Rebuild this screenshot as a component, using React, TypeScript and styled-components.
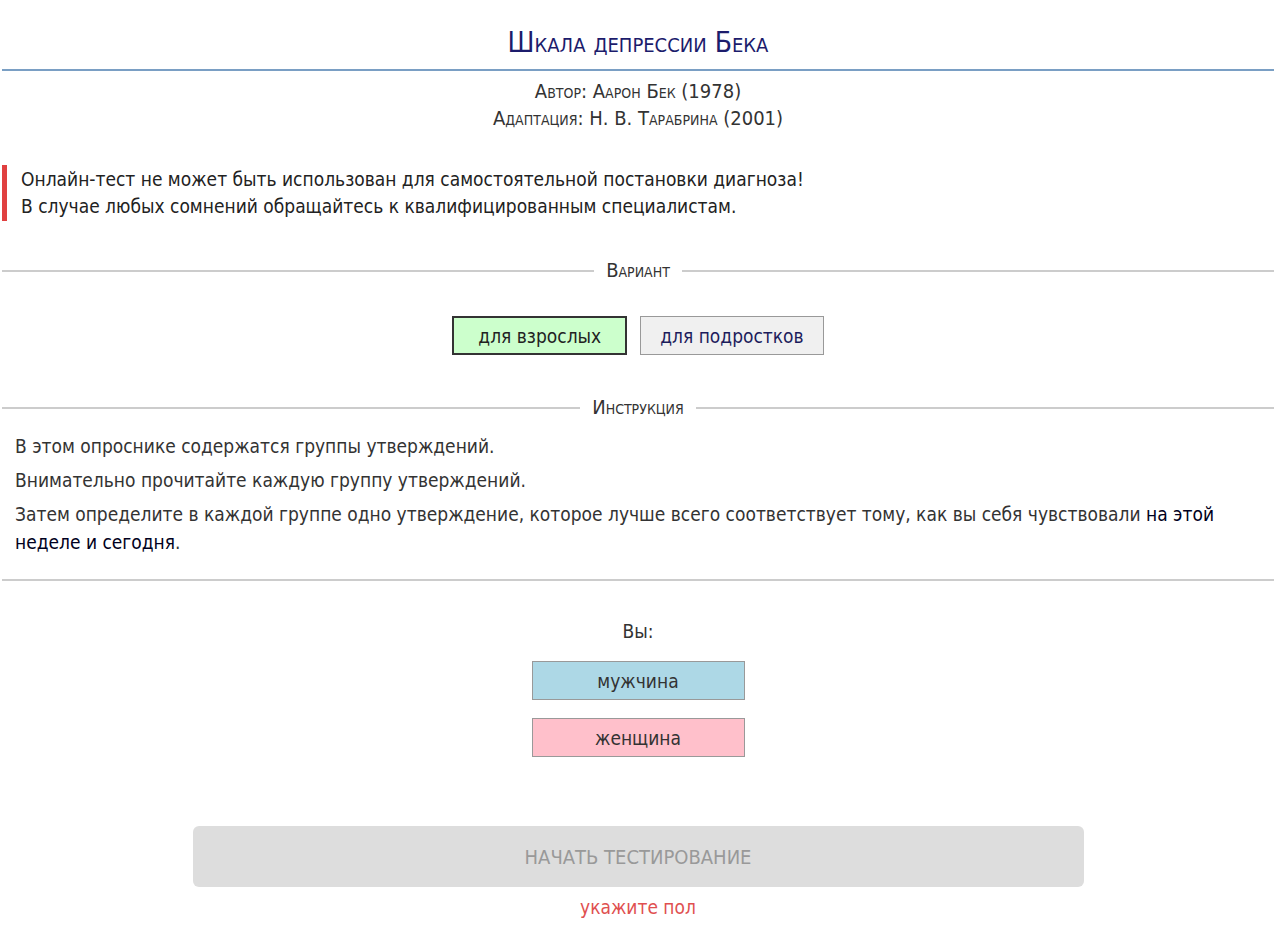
import React, { useState } from 'react';
import styled, { createGlobalStyle } from 'styled-components';

const Global = createGlobalStyle`
  body{
    margin:0;
    background:#fff;
    font-family: "DejaVu Sans Condensed", "DejaVu Sans", sans-serif;
    color:#333;
  }
`

const Page = styled.div`
  padding:0 2px;
`

const Title = styled.h1`
  margin:0;
  padding:26px 0 9px;
  line-height:34px;
  text-align:center;
  font-size:28px;
  font-weight:normal;
  font-variant:small-caps;
  color:#1c1c6c;
  border-bottom:2px solid #7a9fc4;
`

const Credits = styled.div`
  text-align:center;
  font-variant:small-caps;
  font-size:20px;
  line-height:27px;
  padding-top:7px;
`

const Warning = styled.div`
  margin-top:33px;
  border-left:5px solid #e04040;
  padding:1px 0 1px 14px;
  font-size:19px;
  line-height:27px;
  color:#222;
`

const Divider = styled.div<{ $top: number }>`
  display:flex;
  align-items:center;
  gap:12px;
  margin-top:${p => p.$top}px;
  font-variant:small-caps;
  font-size:20px;
  line-height:23px;
  color:#333;
  &::before, &::after{
    content:"";
    flex:1;
    border-top:2px solid #ccc;
  }
`

const Variants = styled.div`
  display:flex;
  justify-content:center;
  gap:13px;
  margin-top:34px;
`

const VariantBtn = styled.button<{ $active?: boolean }>`
  font-family:inherit;
  font-size:19px;
  height:39px;
  padding:0 ${p => (p.$active ? 24 : 19)}px;
  background:${p => (p.$active ? '#ccffcc' : '#f0f0f0')};
  border:${p => (p.$active ? '2px solid #333' : '1px solid #999')};
  color:${p => (p.$active ? '#222' : '#1c1c5c')};
  cursor:pointer;
`

const Instruction = styled.div`
  padding:13px 13px 0;
  font-size:19px;
  color:#333;
  p{
    margin:0 0 6px;
    line-height:28px;
  }
  b{
    font-weight:normal;
    color:#000020;
  }
`

const Rule = styled.hr`
  margin:23px 0 0;
  border:none;
  border-top:2px solid #ccc;
`

const Gender = styled.div`
  display:flex;
  flex-direction:column;
  align-items:center;
  gap:18px;
  margin-top:39px;
  font-size:19px;
`

const You = styled.div`
  line-height:22px;
  margin-bottom:1px;
`

const GenderBtn = styled.button<{ $bg: string }>`
  width:213px;
  height:39px;
  font-family:inherit;
  font-size:19px;
  color:#333;
  background:${p => p.$bg};
  border:1px solid #999;
  cursor:pointer;
`

const Start = styled.div`
  display:flex;
  flex-direction:column;
  align-items:center;
  margin-top:69px;
`

const StartBtn = styled.button`
  width:891px;
  height:61px;
  border:none;
  border-radius:6px;
  background:#ddd;
  color:#999;
  font-family:inherit;
  font-size:20px;
  text-transform:uppercase;
`

const Hint = styled.div`
  margin-top:9px;
  line-height:22px;
  font-size:19px;
  color:#e05050;
`

export default function App() {
  const [variant, setVariant] = useState('adult');
  return (
    <Page>
      <Global />
      <Title>Шкала депрессии Бека</Title>
      <Credits>
        <div>Автор: Аарон Бек (1978)</div>
        <div>Адаптация: Н. В. Тарабрина (2001)</div>
      </Credits>
      <Warning>
        Онлайн-тест не может быть использован для самостоятельной постановки диагноза!<br />
        В случае любых сомнений обращайтесь к квалифицированным специалистам.
      </Warning>
      <Divider $top={38}>Вариант</Divider>
      <Variants>
        <VariantBtn $active={variant === 'adult'} onClick={() => setVariant('adult')}>для взрослых</VariantBtn>
        <VariantBtn $active={variant === 'teen'} onClick={() => setVariant('teen')}>для подростков</VariantBtn>
      </Variants>
      <Divider $top={41}>Инструкция</Divider>
      <Instruction>
        <p>В этом опроснике содержатся группы утверждений.</p>
        <p>Внимательно прочитайте каждую группу утверждений.</p>
        <p>Затем определите в каждой группе одно утверждение, которое лучше всего соответствует тому, как вы себя чувствовали <b>на этой неделе и сегодня</b>.</p>
      </Instruction>
      <Rule />
      <Gender>
        <You>Вы:</You>
        <GenderBtn $bg="#add8e6">мужчина</GenderBtn>
        <GenderBtn $bg="#ffc0cb">женщина</GenderBtn>
      </Gender>
      <Start>
        <StartBtn disabled>Начать тестирование</StartBtn>
        <Hint>укажите пол</Hint>
      </Start>
    </Page>
  );
}
